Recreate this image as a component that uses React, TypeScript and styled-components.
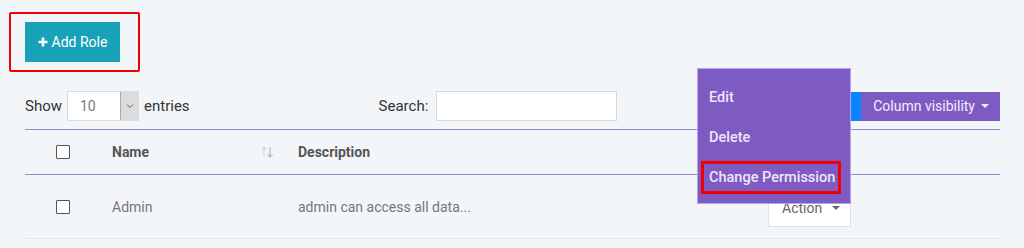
import * as React from "react";
import styled, { createGlobalStyle } from "styled-components";

const GlobalStyle = createGlobalStyle`
  html, body {
    margin: 0;
    padding: 0;
    background: #f3f6f9;
    font-family: Roboto, "Liberation Sans", Arial, sans-serif;
  }
`;

const Page = styled.div`
  position: relative;
  width: 1024px;
  height: 248px;
  overflow: hidden;
  padding: 12px 24px 0 25px;
  box-sizing: border-box;
  background: #f3f6f9;
`;

const Highlight = styled.div`
  display: inline-flex;
  margin-left: -16px;
  padding: 8px 18px 8px 14px;
  border: 2px solid #f20000;
  border-radius: 2px;
`;

const AddButton = styled.button`
  display: flex;
  align-items: center;
  gap: 4px;
  height: 40px;
  width: 95px;
  justify-content: center;
  border: none;
  background: #17a2b8;
  color: #fff;
  font-family: inherit;
  font-size: 14px;
  padding: 0;
`;

const Controls = styled.div`
  display: flex;
  align-items: center;
  margin-top: 19px;
  height: 30px;
  font-size: 15px;
  color: #333;
`;

const Length = styled.label`
  display: flex;
  align-items: center;
  gap: 5px;
`;

const SelectBox = styled.div`
  display: flex;
  width: 72px;
  height: 30px;
  box-sizing: border-box;
  border: 1px solid #d8dde3;
  background: #fff;
`;

const SelectValue = styled.span`
  flex: 1;
  display: flex;
  align-items: center;
  padding-left: 12px;
  color: #777;
  font-size: 14px;
`;

const SelectArrow = styled.span`
  width: 17px;
  display: flex;
  align-items: center;
  justify-content: center;
  background: #dcdcdc;
  border-left: 1px solid #aaa;
`;

const SearchLabel = styled.label`
  display: flex;
  align-items: center;
  gap: 8px;
  margin-left: 189px;
`;

const SearchInput = styled.div`
  width: 181px;
  height: 30px;
  box-sizing: border-box;
  border: 1px solid #d3d8de;
  background: #fff;
`;

const Tools = styled.div`
  display: flex;
  margin-left: auto;
  height: 29px;
`;

const ToolButton = styled.button<{ $bg: string }>`
  display: flex;
  align-items: center;
  gap: 6px;
  border: none;
  background: ${(p) => p.$bg};
  color: #f2eefb;
  font-family: inherit;
  font-size: 14px;
  padding: 0 11px 0 12px;
`;

const Caret = styled.span`
  width: 0;
  height: 0;
  border-left: 4px solid transparent;
  border-right: 4px solid transparent;
  border-top: 4px solid currentColor;
`;

const Table = styled.div`
  margin-top: 8px;
  font-size: 14px;
`;

const Row = styled.div<{ $head?: boolean }>`
  display: grid;
  grid-template-columns: 75px 186px 470px 1fr;
  align-items: center;
  height: ${(p) => (p.$head ? "44px" : "63px")};
  border-top: 1px solid #9b86d6;
  border-bottom: ${(p) => (p.$head ? "none" : "1px solid #e3e6ea")};
  color: ${(p) => (p.$head ? "#555" : "#777")};
  font-weight: ${(p) => (p.$head ? 700 : 400)};
`;

const Cell = styled.div`
  display: flex;
  align-items: center;
  justify-content: space-between;
  padding: 0 12px;
`;

const CheckCell = styled.div`
  display: flex;
  padding-left: 31px;
`;

const Check = styled.span`
  width: 12px;
  height: 12px;
  border: 1px solid #555;
  background: #fff;
  border-radius: 1px;
`;

const ActionButton = styled.div`
  display: flex;
  align-items: center;
  gap: 10px;
  width: 83px;
  height: 39px;
  box-sizing: border-box;
  margin-top: 2px;
  padding-left: 13px;
  border: 1px solid #e0e3e7;
  background: #fff;
  color: #666;
`;

const Menu = styled.div`
  position: absolute;
  left: 697px;
  top: 68px;
  width: 154px;
  height: 136px;
  box-sizing: border-box;
  padding: 9px 0 8px 0;
  background: #7e5bc3;
  border: 1px solid #b5a3e3;
  display: flex;
  flex-direction: column;
`;

const MenuItem = styled.div<{ $marked?: boolean }>`
  height: ${(p) => (p.$marked ? "33px" : "39.5px")};
  display: flex;
  align-items: center;
  box-sizing: border-box;
  margin: ${(p) => (p.$marked ? "4px 9px 0 3px" : "0")};
  padding-left: ${(p) => (p.$marked ? "5px" : "11px")};
  border: ${(p) => (p.$marked ? "3px solid #f20000" : "none")};
  color: #ece6f8;
  font-size: 14.5px;
  font-weight: 500;
`;

const SortIcon = () => (
  <svg width="14" height="14" viewBox="0 0 14 14">
    <path d="M4 2v10M1.5 4.5 4 2l2.5 2.5" stroke="#d6d9de" strokeWidth="1.2" fill="none" />
    <path d="M10 2v10M7.5 9.5 10 12l2.5-2.5" stroke="#b4b8be" strokeWidth="1.2" fill="none" />
  </svg>
);

export default function App() {
  return (
    <>
      <GlobalStyle />
      <Page>
        <Highlight>
          <AddButton>
            <svg width="10" height="10" viewBox="0 0 10 10">
              <path d="M5 0.5v9M0.5 5h9" stroke="#fff" strokeWidth="2.6" />
            </svg>
            Add Role
          </AddButton>
        </Highlight>
        <Controls>
          <Length>
            Show
            <SelectBox>
              <SelectValue>10</SelectValue>
              <SelectArrow>
                <svg width="8" height="6" viewBox="0 0 8 6">
                  <path d="M1 1.5 4 4.5 7 1.5" stroke="#666" strokeWidth="1" fill="none" />
                </svg>
              </SelectArrow>
            </SelectBox>
            entries
          </Length>
          <SearchLabel>
            Search:
            <SearchInput />
          </SearchLabel>
          <Tools>
            <ToolButton $bg="#0a84ff">Print</ToolButton>
            <ToolButton $bg="#7e5bc3">
              Column visibility
              <Caret />
            </ToolButton>
          </Tools>
        </Controls>
        <Table>
          <Row $head>
            <CheckCell>
              <Check />
            </CheckCell>
            <Cell>
              Name
              <SortIcon />
            </Cell>
            <Cell>Description</Cell>
            <Cell />
          </Row>
          <Row>
            <CheckCell>
              <Check />
            </CheckCell>
            <Cell>Admin</Cell>
            <Cell>admin can access all data...</Cell>
            <Cell>
              <ActionButton>
                Action
                <Caret />
              </ActionButton>
            </Cell>
          </Row>
        </Table>
        <Menu>
          <MenuItem>Edit</MenuItem>
          <MenuItem>Delete</MenuItem>
          <MenuItem $marked>Change Permission</MenuItem>
        </Menu>
      </Page>
    </>
  );
}
